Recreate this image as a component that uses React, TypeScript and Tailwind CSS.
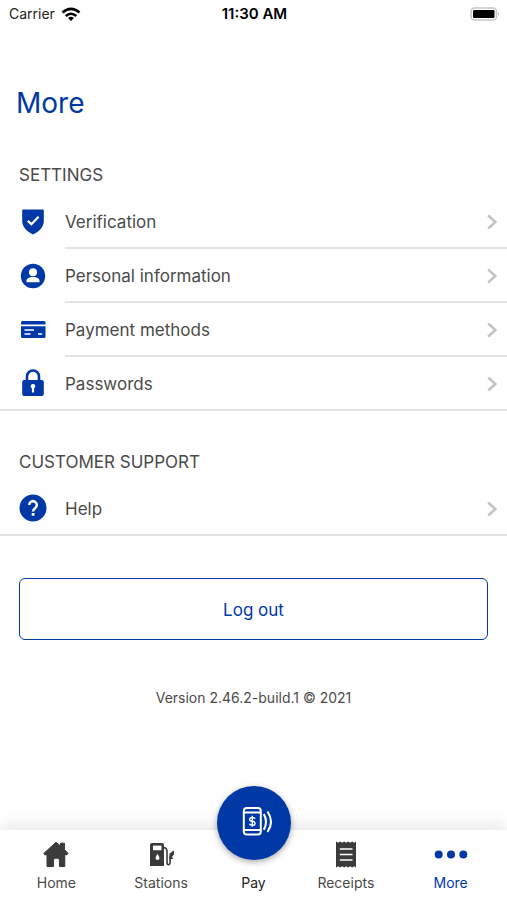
import type { ReactNode } from 'react';

type Item = { label: string; icon: ReactNode };

const ShieldIcon = () => (
    <svg viewBox="0 0 26 28" className="w-[26px] h-7" fill="none">
        <path d="M3.200 1.500h19.600q1 0 1 1V13c0 6-4.600 10.500-10.800 13.500C6.800 23.500 2.200 19 2.200 13V2.500q0-1 1-1Z" fill="#0039a6" />
        <path d="M7.800 12.800l3.600 3.400 7.200-7.400" stroke="#fff" strokeWidth="2.300" />
    </svg>
);

const PersonIcon = () => (
    <svg viewBox="0 0 26 26" className="size-[26px]">
        <circle cx="13" cy="13" r="12.200" fill="#0039a6" />
        <circle cx="13" cy="9.200" r="4" fill="#fff" />
        <path d="M6.500 19.200v-1.400c0-2.400 3.400-3.700 6.500-3.700s6.500 1.300 6.500 3.700v1.400Z" fill="#fff" />
    </svg>
);

const CardIcon = () => (
    <svg viewBox="0 0 26 20" className="w-[26px] h-5">
        <path d="M2.500 1h21.500q1.500 0 1.500 1.500V4.600H1V2.500Q1 1 2.500 1Z" fill="#0039a6" />
        <path d="M1 6.300h24.500v10.200q0 1.500-1.500 1.500H2.500Q1 18 1 16.500Z" fill="#0039a6" />
        <path d="M4.500 10h9.500M4.500 14h6M18 14h4.200" stroke="#fff" strokeWidth="1.700" />
    </svg>
);

const LockIcon = () => (
    <svg viewBox="0 0 26 28" className="w-[26px] h-7">
        <path d="M7 12V7.500a6 6 0 0 1 12 0V12" fill="none" stroke="#0039a6" strokeWidth="2.600" />
        <rect x="2.200" y="11" width="21.600" height="16" rx="2" fill="#0039a6" />
        <circle cx="13" cy="17.200" r="2.300" fill="#fff" />
        <path d="M11.900 17.500h2.200v6h-2.200Z" fill="#fff" />
    </svg>
);

const HelpIcon = () => (
    <svg viewBox="0 0 28 28" className="size-7" fill="none">
        <circle cx="14" cy="14" r="13.500" fill="#0039a6" />
        <path d="M10.200 11a3.800 3.800 0 1 1 6.200 2.900c-1.600 1.200-2.300 1.900-2.300 3.500" stroke="#fff" strokeWidth="2.500" />
        <rect x="12.700" y="19" width="2.800" height="2.700" fill="#fff" />
    </svg>
);

const HomeIcon = () => (
    <svg viewBox="0 0 28 28" className="size-7" fill="#3b3b3b" stroke="#3b3b3b" strokeLinejoin="round">
        <path d="M14 2.200L18.500 6V3.200h4V9.500L26 13.400l-1 1.300h-2.200V26.500h-5.300v-6.200q0-2-2-2h-2q-2 0-2 2v6.200H5V14.700H2.500L1.800 13.400Z" strokeWidth="1" />
    </svg>
);

const PumpIcon = () => (
    <svg viewBox="0 0 28 28" className="size-7" fill="none">
        <path d="M5 3h10q2 0 2 2v21H3V5q0-2 2-2Z" fill="#3b3b3b" />
        <path d="M6 5.600h8.500v4.600H6Z" fill="#fff" />
        <path d="M10.500 14q2.500 3.400 1.700 5.200-1.700 1.600-3.400 0-.8-1.800 1.700-5.200Z" fill="#fff" />
        <path d="M17 7.500q3 .5 3 4v10.500q0 2.700 1.500 2.700t1.600-2.700v-4l2.900-6.500" stroke="#3b3b3b" strokeWidth="1.600" />
        <path d="M27 10.500l-4.600 3.200v5.300h3.600l-.9-2.500 1.900-2.100Z" fill="#3b3b3b" />
    </svg>
);

const ReceiptIcon = () => (
    <svg viewBox="0 0 28 28" className="size-7">
        <path d="M4 1.500l2.200 1.300 2-1.300 2 1.300 2-1.300 2 1.300 2-1.300 2 1.300 2-1.300 2 1.300L24 1.500v26l-1.800-1.300-2 1.300-2-1.300-2 1.300-2-1.300-2 1.300-2-1.300-2 1.300-2-1.300L4 27.500Z" fill="#3b3b3b" />
        <path d="M7.800 9h12.700M7.800 14.500h12.700M7.800 20h12.700" stroke="#fff" strokeWidth="1.700" />
    </svg>
);

const DotsIcon = () => (
    <svg viewBox="0 0 34 28" className="w-[34px] h-7" fill="#0039a6">
        <circle cx="4.700" cy="14.500" r="4" />
        <circle cx="17" cy="14.500" r="4" />
        <circle cx="29.300" cy="14.500" r="4" />
    </svg>
);

const PayIcon = () => (
    <svg viewBox="0 0 74 74" className="size-[74px]" fill="none" stroke="#fff">
        <rect x="26.800" y="22" width="17" height="26.500" rx="3" strokeWidth="2" />
        <path d="M27 26.500h17M27 44h17" strokeWidth="2" />
        <path d="M38 32.900q-.6-1.400-2.700-1.400-2.600 0-2.600 1.900 0 1.500 2.600 1.800 2.800.4 2.800 2.200 0 1.900-2.800 1.900-2.200 0-2.900-1.500M35.300 29.800v11" strokeWidth="1.400" />
        <path d="M46.800 28q4.400 7.800 0 15.800M50.500 25.500q7 10.200 0 20.500" strokeWidth="2.100" />
    </svg>
);

const Chevron = () => (
    <svg viewBox="0 0 10 16" className="w-[10px] h-4" fill="none">
        <path d="M1.200 1.500L8.300 8l-7.100 6.500" stroke="#c4c4c4" strokeWidth="2.500" />
    </svg>
);

const settings: Item[] = [
    { label: 'Verification', icon: <ShieldIcon /> },
    { label: 'Personal information', icon: <PersonIcon /> },
    { label: 'Payment methods', icon: <CardIcon /> },
    { label: 'Passwords', icon: <LockIcon /> },
];

const support: Item[] = [{ label: 'Help', icon: <HelpIcon /> }];

function Section({ title, items }: { title: string; items: Item[] }) {
    return (
        <section>
            <h2 className="px-[19px] text-[17px] leading-6">{title}</h2>
            <ul className="mt-2 border-b-2 border-[#e4e4e4]">
                {items.map((item, i) => (
                    <li key={item.label}>
                        <button type="button" className="flex w-full text-left">
                            <span className="flex w-[65px] shrink-0 items-center justify-center self-stretch">{item.icon}</span>
                            <span className={`flex flex-1 items-center justify-between pr-[10px] pt-0.5 ${i < items.length - 1 ? 'h-[54px] border-b-2 border-[#e4e4e4]' : 'h-[52px]'}`}>
                                <span className="text-[17px] leading-6">{item.label}</span>
                                <Chevron />
                            </span>
                        </button>
                    </li>
                ))}
            </ul>
        </section>
    );
}

function Tab({ label, icon, active }: Item & { active?: boolean }) {
    return (
        <a href="#" className={`flex flex-1 flex-col items-center pt-[10px] ${active ? 'text-[#0039a6]' : ''}`}>
            {icon}
            <span className="mt-[5px] text-[14px] leading-5">{label}</span>
        </a>
    );
}

export default function App() {
    return (
        <div className="flex min-h-screen flex-col bg-white font-['Inter',sans-serif] text-[#4a4a4a]">
            <header className="grid h-7 grid-cols-3 items-center pl-[9px] pr-[7px] text-[14px] leading-5 text-black">
                <div className="flex items-center gap-1.5 text-[#222]">
                    Carrier
                    <svg viewBox="0 0 20 15" className="w-5 h-[15px]" fill="none" stroke="#000" strokeWidth="2.600">
                        <path d="M1.500 5.500Q10-1.800 18.500 5.500M4.700 9Q10 4.500 15.300 9" />
                        <path d="M10 14L7 11Q10 8.700 13 11Z" fill="#000" stroke="none" />
                    </svg>
                </div>
                <span className="text-center text-[15px] font-semibold">11:30 AM</span>
                <svg viewBox="0 0 30 14" className="w-[30px] h-[14px] justify-self-end" fill="none">
                    <rect x="1" y="1" width="25.500" height="12" rx="3.500" stroke="#c8c8c8" strokeWidth="1.600" />
                    <rect x="3" y="3" width="21.500" height="8" rx="1.200" fill="#000" />
                    <path d="M28 5q2 2 0 4Z" fill="#b5b5b5" />
                </svg>
            </header>

            <main className="flex-1">
                <h1 className="mt-[55px] px-4 text-[28px] leading-10 text-[#0039a6]">More</h1>
                <div className="mt-10">
                    <Section title="SETTINGS" items={settings} />
                </div>
                <div className="mt-[39px]">
                    <Section title="CUSTOMER SUPPORT" items={support} />
                </div>
                <div className="mt-[42px] px-[19px]">
                    <button type="button" className="h-[62px] w-full rounded-md border border-[#0039a6] pt-0.5 text-[17px] leading-6 text-[#0039a6]">
                        Log out
                    </button>
                </div>
                <p className="mt-12 text-center text-[14px] leading-5">Version 2.46.2-build.1 © 2021</p>
            </main>

            <nav className="sticky bottom-0 flex h-[70px] bg-white px-1 shadow-[0_-4px_16px_rgba(0,0,0,0.1)]">
                <Tab label="Home" icon={<HomeIcon />} />
                <Tab label="Stations" icon={<PumpIcon />} />
                <a href="#" className="flex w-20 flex-col items-center text-[#222]">
                    <span className="-mt-11 rounded-full bg-[#0039a6] shadow-[0_2px_6px_rgba(0,0,0,0.35)]">
                        <PayIcon />
                    </span>
                    <span className="mt-[13px] text-[14px] leading-5">Pay</span>
                </a>
                <Tab label="Receipts" icon={<ReceiptIcon />} />
                <Tab label="More" icon={<DotsIcon />} active />
            </nav>
        </div>
    );
}
